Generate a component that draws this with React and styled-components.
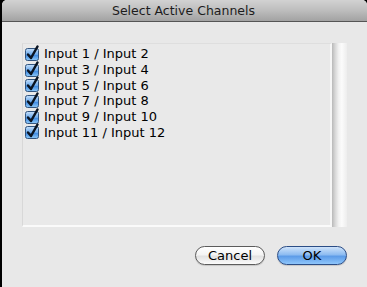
import React from 'react'
import styled, { createGlobalStyle } from 'styled-components'

const GlobalStyle = createGlobalStyle`
    html, body {
        margin: 0;
        padding: 0;
        background: #000;
    }
    body {
        font-family: "DejaVu Sans", "Liberation Sans", sans-serif;
    }
`

const Window = styled.div`
    margin-left: 2px;
    height: 287px;
    background: #e8e8e8;
    border-top-left-radius: 5px;
    border-top-right-radius: 5px;
    overflow: hidden;
    display: flex;
    flex-direction: column;
`

const TitleBar = styled.div`
    height: 21px;
    flex: none;
    border-bottom: 1px solid #555;
    background: linear-gradient(to bottom, #d2d2d2 0%, #bdbdbd 50%, #a2a2a2 100%);
    display: flex;
    align-items: center;
    justify-content: center;
    font-size: 12.5px;
    color: #1c1c1c;
    padding-right: 2px;
`

const Body = styled.div`
    padding: 21px 20px 0 20px;
    display: flex;
    flex-direction: column;
`

const ListArea = styled.div`
    display: flex;
    height: 184px;
`

const List = styled.div`
    flex: 1;
    border-top: 1px solid #dedede;
    border-left: 1px solid #d8d8d8;
    border-right: 2px solid #f6f6f6;
    border-bottom: 2px solid #fafafa;
    background: #e9e9e9;
    padding: 2px 0 0 2px;
`

const Row = styled.label`
    display: flex;
    align-items: center;
    height: 15.7px;
    font-size: 13px;
    color: #000;
    gap: 5px;
`

const Scrollbar = styled.div`
    width: 15px;
    background: linear-gradient(to right, #b9b9b9 0%, #d6d6d6 20%, #f2f2f2 45%, #fbfbfb 65%, #ededed 100%);
`

const Footer = styled.div`
    display: flex;
    justify-content: flex-end;
    gap: 12px;
    padding-top: 19px;
`

const Button = styled.button`
    width: 70px;
    height: 19px;
    border-radius: 10px;
    font-family: "DejaVu Sans", "Liberation Sans", sans-serif;
    font-size: 13px;
    padding: 0;
    color: #000;
    border: 1px solid ${p => p.$primary ? '#2b4d86' : '#5c5c5c'};
    background: ${p => p.$primary
        ? 'linear-gradient(to bottom, #cfe3fa 0%, #8dbcf1 45%, #5d9ce8 55%, #8ec6fb 100%)'
        : 'linear-gradient(to bottom, #ffffff 0%, #f4f4f4 45%, #e2e2e2 55%, #fbfbfb 100%)'};
    box-shadow: 0 1px 1px rgba(0, 0, 0, 0.15);
`

const Check = () => (
    <svg width="14" height="14" viewBox="0 0 14 14" style={{ overflow: 'visible', flex: 'none' }}>
        <defs>
            <linearGradient id="cb" x1="0" y1="0" x2="0" y2="1">
                <stop offset="0" stopColor="#c8e1fb" />
                <stop offset="0.5" stopColor="#6aa9ec" />
                <stop offset="0.55" stopColor="#3f8ae2" />
                <stop offset="1" stopColor="#8fcaf9" />
            </linearGradient>
        </defs>
        <rect x="0.5" y="1.5" width="13" height="12" rx="2" fill="url(#cb)" stroke="#32557f" />
        <path d="M3 7.5 L6 11 L12.5 -0.5" fill="none" stroke="#0a1422" strokeWidth="2.5" strokeLinecap="round" strokeLinejoin="round" />
    </svg>
)

const channels = [
    'Input 1 / Input 2',
    'Input 3 / Input 4',
    'Input 5 / Input 6',
    'Input 7 / Input 8',
    'Input 9 / Input 10',
    'Input 11 / Input 12',
]

export default function App() {
    return (
        <React.Fragment>
            <GlobalStyle />
            <Window>
                <TitleBar>Select Active Channels</TitleBar>
                <Body>
                    <ListArea>
                        <List>
                            {channels.map(name => (
                                <Row key={name}>
                                    <Check />
                                    {name}
                                </Row>
                            ))}
                        </List>
                        <Scrollbar />
                    </ListArea>
                    <Footer>
                        <Button>Cancel</Button>
                        <Button $primary>OK</Button>
                    </Footer>
                </Body>
            </Window>
        </React.Fragment>
    )
}
